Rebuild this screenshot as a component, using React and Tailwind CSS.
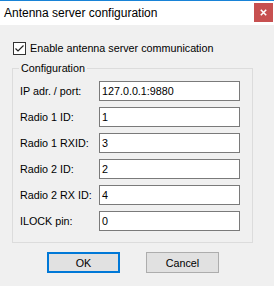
import React from "react";

const rows = [
  ["IP adr. / port:", "127.0.0.1:9880"],
  ["Radio 1 ID:", "1"],
  ["Radio 1 RXID:", "3"],
  ["Radio 2 ID:", "2"],
  ["Radio 2 RX ID:", "4"],
  ["ILOCK pin:", "0"],
];

export default function App() {
  return (
    <div className="w-[274px] h-[286px] bg-[#f0f0f0] overflow-hidden flex flex-col text-[10.75px] text-black font-['Liberation_Sans',Arial,sans-serif]">
      <div className="h-[25px] shrink-0 bg-white border-t border-[#1883d7] flex items-start justify-between">
        <div className="pl-[4px] pt-[4px] text-[12px] leading-[16px] text-black">
          Antenna server configuration
        </div>
        <div className="mt-[2px] mr-[1px] w-[19px] h-[19px] bg-[#c75050] flex items-center justify-center">
          <svg width="7" height="7" viewBox="0 0 7 7">
            <path d="M0.8 0.8 L6.2 6.2 M6.2 0.8 L0.8 6.2" stroke="white" strokeWidth="1.6" />
          </svg>
        </div>
      </div>

      <div className="flex items-center mt-[17px] ml-[13px] h-[13px]">
        <div className="w-[13px] h-[13px] border border-[#333333] bg-white flex items-center justify-center">
          <svg width="11" height="11" viewBox="0 0 11 11">
            <path d="M1.5 5.5 L4 8 L9.5 2.5" stroke="#222" strokeWidth="1.2" fill="none" />
          </svg>
        </div>
        <span className="ml-[4px] leading-[13px]">Enable antenna server communication</span>
      </div>

      <div className="relative mt-[13px] ml-[12px] w-[241px] h-[175px] border border-[#dcdcdc]">
        <span className="absolute -top-[8px] left-[6px] px-[2px] bg-[#f0f0f0] leading-[14px]">Configuration</span>
        <div className="flex flex-col gap-[6px] mt-[12px]">
          {rows.map(([label, value]) => (
            <div key={label} className="flex items-center h-[20px]">
              <div className="w-[86px] pl-[7px] leading-[14px]">{label}</div>
              <div className="w-[141px] h-[20px] border border-[#7a7a7a] bg-white pl-[2px] flex items-center leading-[14px]">
                {value}
              </div>
            </div>
          ))}
        </div>
      </div>

      <div className="flex mt-[9px] ml-[47px] gap-[26px]">
        <div className="w-[73px] h-[21px] border-2 border-[#0078d7] bg-[#e1e1e1] flex items-center justify-center leading-[14px]">
          OK
        </div>
        <div className="w-[73px] h-[21px] border border-[#adadad] bg-[#e1e1e1] flex items-center justify-center leading-[14px]">
          Cancel
        </div>
      </div>
    </div>
  );
}
